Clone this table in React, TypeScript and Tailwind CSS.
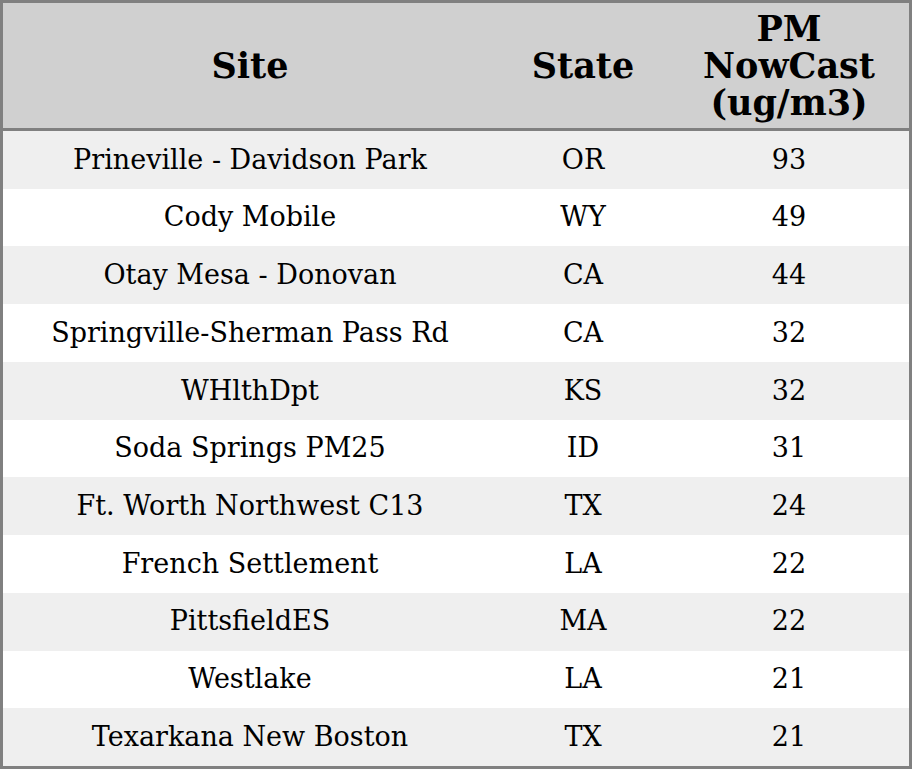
const rows: [string, string, number][] = [
  ["Prineville - Davidson Park", "OR", 93],
  ["Cody Mobile", "WY", 49],
  ["Otay Mesa - Donovan", "CA", 44],
  ["Springville-Sherman Pass Rd", "CA", 32],
  ["WHlthDpt", "KS", 32],
  ["Soda Springs PM25", "ID", 31],
  ["Ft. Worth Northwest C13", "TX", 24],
  ["French Settlement", "LA", 22],
  ["PittsfieldES", "MA", 22],
  ["Westlake", "LA", 21],
  ["Texarkana New Boston", "TX", 21],
];

const App = () => {
  return (
    <div className="w-[912px] h-[769px] bg-white font-['DejaVu_Serif',serif] text-black">
      <div className="flex flex-col h-full border-[3px] border-[#808080]">
        {/* Header */}
        <div className="grid grid-cols-[494px_172px_1fr] h-[128px] shrink-0 bg-[#d0d0d0] border-b-[3px] border-[#808080] text-[35px] font-bold leading-[37px]">
          <div className="flex items-center justify-center">Site</div>
          <div className="flex items-center justify-center">State</div>
          <div className="flex items-center justify-center text-center">
            PM
            <br />
            NowCast
            <br />
            (ug/m3)
          </div>
        </div>
        {/* Body */}
        <div className="flex-1 grid grid-rows-11 text-[27px]">
          {rows.map(([site, state, value], i) => (
            <div
              key={site}
              className={`grid grid-cols-[494px_172px_1fr] items-center text-center ${
                i % 2 === 0 ? "bg-[#efefef]" : "bg-white"
              }`}
            >
              <div>{site}</div>
              <div>{state}</div>
              <div>{value}</div>
            </div>
          ))}
        </div>
      </div>
    </div>
  );
};

export default App;
